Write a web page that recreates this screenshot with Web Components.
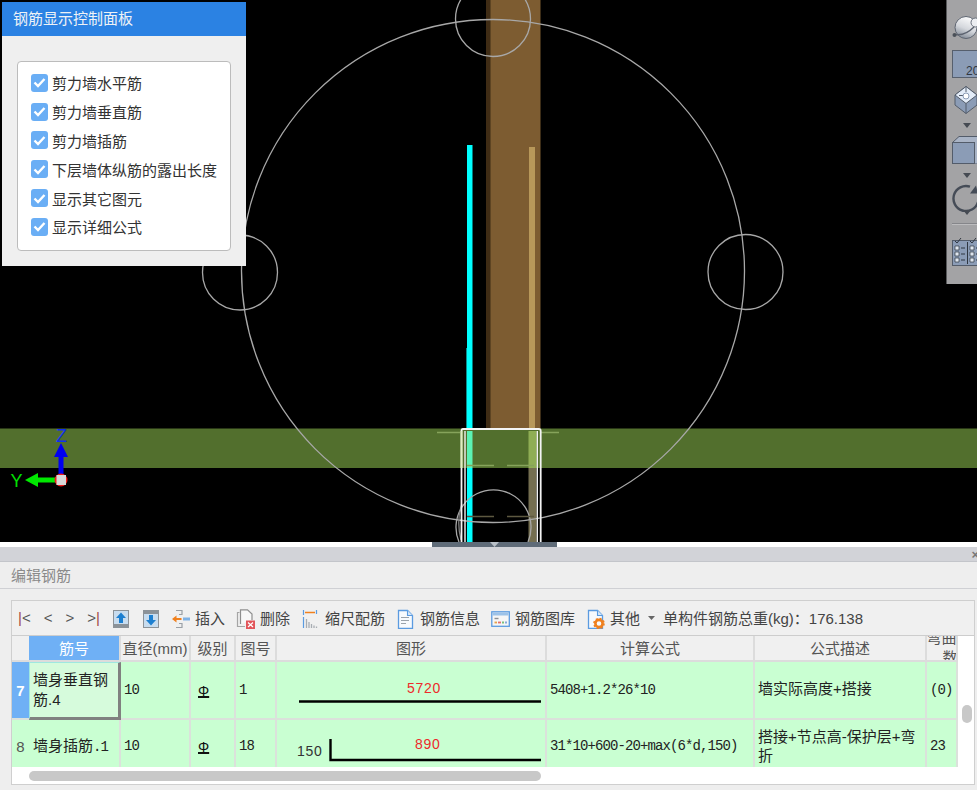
<!DOCTYPE html>
<html lang="zh">
<head>
<meta charset="utf-8">
<title>钢筋显示控制面板</title>
<style>
    html, body { margin: 0; height: 790px; overflow: hidden; background: #eee; }
    body { display: flex; flex-direction: column; font-family: "Liberation Sans", "Noto Sans CJK SC", sans-serif; }
</style>
</head>
<body>
<rebar-viewport>
    <control-panel title-text="钢筋显示控制面板">
        <check-row>剪力墙水平筋</check-row>
        <check-row>剪力墙垂直筋</check-row>
        <check-row>剪力墙插筋</check-row>
        <check-row>下层墙体纵筋的露出长度</check-row>
        <check-row>显示其它图元</check-row>
        <check-row>显示详细公式</check-row>
    </control-panel>
    <view-toolbar></view-toolbar>
</rebar-viewport>
<edit-panel>
    <rebar-toolbar></rebar-toolbar>
    <rebar-table></rebar-table>
</edit-panel>

<script>
class RebarViewport extends HTMLElement {
    constructor() {
        super();
        this.attachShadow({ mode: 'open' });
    }

    connectedCallback() {
        this.shadowRoot.innerHTML = `
            <style>
                :host { display: block; position: relative; height: 542px; flex: none; background: #000; overflow: hidden; }
                svg { display: block; }
                text { font-family: "Liberation Sans", sans-serif; font-size: 18px; }
            </style>
            <svg width="977" height="542" viewBox="0 0 977 542">
                <!-- 墙柱 -->
                <rect x="486" y="0" width="5" height="428" fill="#3f2c15"/>
                <rect x="490.5" y="0" width="50" height="428" fill="#7d5c31"/>
                <rect x="529" y="147" width="6" height="281" fill="#b8985a"/>
                <rect x="466" y="348" width="1" height="80" fill="#0b8f8f"/>
                <rect x="467" y="145" width="5.5" height="397" fill="#00ffff"/>

                <!-- 楼板 -->
                <rect x="0" y="428.5" width="977" height="39.5" fill="#526f2d"/>
                <rect x="467" y="431" width="5.5" height="37" fill="#5cf3b4"/>
                <rect x="528.5" y="431" width="8" height="37" fill="#8fae55"/>
                <rect x="528.5" y="468" width="8" height="74" fill="#746e50"/>

                <g fill="none" stroke="#a8a8a8" stroke-width="1.3">
                    <circle cx="493" cy="271" r="251.5"/>
                    <circle cx="493" cy="19" r="37.5"/>
                    <circle cx="240" cy="272.5" r="37.5"/>
                    <circle cx="745.5" cy="272" r="37.5"/>
                    <path d="M459 542 A37.5 37.5 0 1 1 528 542"/>
                    <path d="M462 504 Q456 520 461 540" stroke="#808080"/>
                </g>

                <g stroke-width="1.5" fill="none">
                    <path d="M437 432.5H460M541 432.5H559" stroke="#86a35b"/>
                    <path d="M467 465.5H494M507 465.5H534" stroke="#86a35b"/>
                    <path d="M467 516.5H494M507 516.5H534" stroke="#5d5840"/>
                </g>

                <!-- 外框 -->
                <path d="M461.5 542V431Q461.5 429 463 429H539Q540.7 429 540.7 431V542" fill="none" stroke="#f4f4f4" stroke-width="1.8"/>
                <path d="M461.5 431V468" fill="none" stroke="#dff0bd" stroke-width="1.8"/>
                <path d="M465 431V542M537.3 431V542" fill="none" stroke="#f2f2f2" stroke-width="1.4"/>

                <!-- 坐标轴 -->
                <rect x="58.5" y="455" width="5" height="22" fill="#0000f0"/>
                <path d="M61 443L68 457H54Z" fill="#0000f0"/>
                <rect x="38" y="477.5" width="18" height="5" fill="#00e800"/>
                <path d="M25 480L38 473V487Z" fill="#00e800"/>
                <circle cx="61" cy="480" r="6.5" fill="#f01818"/>
                <rect x="56.5" y="475" width="9.5" height="10" fill="#d8d8d8"/>
                <text x="56" y="442" fill="#1030f0">Z</text>
                <text x="10.5" y="487" fill="#00e000">Y</text>
            </svg>
            <slot></slot>
        `;
    }
}

class ControlPanel extends HTMLElement {
    constructor() {
        super();
        this.attachShadow({ mode: 'open' });
    }

    connectedCallback() {
        this.shadowRoot.innerHTML = `
            <style>
                :host { display: flex; flex-direction: column; position: absolute; left: 2px; top: 2px; width: 244px; height: 264px; background: #efefef; font-size: 15px; }
                .title { height: 34px; box-sizing: border-box; flex: none; display: flex; align-items: center; padding: 0 0 4px 11px; background: #2b82e3; color: #eef2f6; }
                .body { flex: 1; padding: 25px 15px 15px; display: flex; }
                .box { flex: 1; box-sizing: border-box; padding: 6.5px 13px; background: #fff; border: 1px solid #bcbcbc; border-radius: 4px; display: grid; grid-auto-rows: 28.8px; }
            </style>
            <div class="title">${this.getAttribute('title-text')}</div>
            <div class="body"><div class="box"><slot></slot></div></div>
        `;
    }
}

class CheckRow extends HTMLElement {
    constructor() {
        super();
        this.attachShadow({ mode: 'open' });
    }

    connectedCallback() {
        this.shadowRoot.innerHTML = `
            <style>
                :host { display: flex; align-items: center; gap: 4px; color: #333; font-size: 15px; white-space: nowrap; }
                .box { width: 17px; height: 18px; border-radius: 3px; background: #6aaef5; display: flex; align-items: center; justify-content: center; flex: none; }
            </style>
            <span class="box">
                <svg width="13" height="11" viewBox="0 0 13 11"><path d="M1.5 5.5L5 9L11.5 2" fill="none" stroke="#fff" stroke-width="2.4"/></svg>
            </span>
            <slot></slot>
        `;
    }
}

class ViewToolbar extends HTMLElement {
    constructor() {
        super();
        this.attachShadow({ mode: 'open' });
    }

    connectedCallback() {
        const caret = (top) => `<svg class="caret" style="margin-top:${top}px" width="8" height="5" viewBox="0 0 8 5"><path d="M0 0H8L4 5Z" fill="#454a52"/></svg>`;
        this.shadowRoot.innerHTML = `
            <style>
                :host { display: flex; flex-direction: column; position: absolute; right: 0; top: 0; box-sizing: border-box; width: 31px; height: 284px; background: #a3a3a5; border-left: 1px solid #57585a; overflow: hidden; padding-left: 5px; }
                svg { display: block; flex: none; overflow: hidden; }
                .caret { margin-left: 11px; }
                .sep { margin-top: 8px; height: 1px; background: #85868a; border-bottom: 1px solid #bcbcbe; flex: none; }
                text { font-family: "Liberation Sans", sans-serif; font-size: 12px; fill: #2f3640; }
            </style>
            <svg style="margin-top:15px" width="25" height="25" viewBox="0 0 25 25">
                <defs><linearGradient id="ball" x1="0.7" y1="0" x2="0.3" y2="1"><stop offset="0" stop-color="#ffffff"/><stop offset=".55" stop-color="#d4d7dc"/><stop offset="1" stop-color="#7f8894"/></linearGradient></defs>
                <circle cx="14" cy="12.500" r="11" fill="url(#ball)" stroke="#5d6470"/>
                <circle cx="23.500" cy="7.500" r="4.500" fill="#eceef1" stroke="#6a717c"/>
                <path d="M3.500 19.500Q13 21 22 12" fill="none" stroke="#5d6470" stroke-width="1.400"/>
                <circle cx="2.500" cy="20" r="2" fill="#4a5058"/>
            </svg>
            <svg style="margin-top:10px" width="25" height="28" viewBox="0 0 25 28">
                <rect x=".5" y=".5" width="30" height="27" fill="#8b9cb6" stroke="#565f6d"/>
                <text x="14" y="25">20</text>
            </svg>
            <svg style="margin-top:8px;margin-left:2px" width="23" height="28" viewBox="0 0 23 28">
                <path d="M1 9L12 .5L23 9V19L12 27.500L1 19Z" fill="#8b9cb6" stroke="#535c6a"/>
                <path d="M1 9L12 .5L23 9L12 17.500Z" fill="#e3ecf8" stroke="#535c6a"/>
                <path d="M12 17.500V27.500M12 .5V6M5 9.500L9.500 9.500" stroke="#535c6a" fill="none"/>
                <circle cx="12" cy="10" r="3" fill="#fff" stroke="#8b9cb6"/>
            </svg>
            ${caret(9)}
            <svg style="margin-top:8px" width="25" height="28" viewBox="0 0 25 28">
                <path d="M.5 6.5L7 .5H30V28H.5Z" fill="#a9b4c6" stroke="#535c6a"/>
                <rect x=".5" y="6.5" width="22" height="21" fill="#8b9cb6" stroke="#535c6a"/>
            </svg>
            ${caret(9)}
            <svg style="margin-top:6px" width="25" height="28" viewBox="0 0 25 28">
                <path d="M18 2.700A12.500 12.500 0 1 0 26 18" fill="none" stroke="#454c57" stroke-width="2.400"/>
                <path d="M18 9.500L26 9.500L24 1.500Z" fill="#454c57"/>
            </svg>
            ${caret(-2)}
            <div class="sep"></div>
            <svg style="margin-top:12px" width="25" height="29" viewBox="0 0 25 29">
                <rect x=".5" y="3.5" width="30" height="25" fill="#8b9cb6" stroke="#535c6a"/>
                <path d="M3 4L5 6L9 1M18 4L20 6L24 1" fill="none" stroke="#2f3640"/>
                <path d="M3 9h4v4H3zM3 15h4v4H3zM3 21h4v4H3zM18 9h4v4h-4zM18 15h4v4h-4zM18 21h4v4h-4z" fill="#dfe6f0" stroke="#2f3640" stroke-width=".7"/>
                <path d="M9 11h4M9 17h4M9 23h4M24 11h4M24 17h4M24 23h4M15.500 5V27" stroke="#2f3640"/>
            </svg>
        `;
    }
}

class EditPanel extends HTMLElement {
    constructor() {
        super();
        this.attachShadow({ mode: 'open' });
    }

    connectedCallback() {
        this.shadowRoot.innerHTML = `
            <style>
                :host { display: block; flex: 1; background: #eee; font-size: 15px; }
                .strip { height: 5px; background: #fff; display: flex; justify-content: center; }
                .grip { width: 125px; margin-left: 12px; background: #5f6b78; display: flex; justify-content: center; }
                .dock { height: 15px; box-sizing: border-box; background: #d2d3d8; border-bottom: 1px solid #c3c5ca; display: flex; justify-content: flex-end; align-items: center; overflow: hidden; color: #777; font-size: 13px; padding-right: 0; }
                .dock span { margin-right: -2px; font-weight: bold; }
                .title { height: 27px; box-sizing: border-box; padding: 0 0 2px 11px; display: flex; align-items: center; color: #8a8a8a; border-bottom: 1px solid #cfd0d4; }
                .frame { margin: 11px 2px 0 11px; height: 185px; box-sizing: border-box; border: 1px solid #cfcfcf; background: #fff; overflow: hidden; }
            </style>
            <div class="strip">
                <div class="grip"><svg width="9" height="5" viewBox="0 0 9 5"><path d="M0 0H9L4.500 5Z" fill="#b9c0c8"/></svg></div>
            </div>
            <div class="dock"><span>×</span></div>
            <div class="title">编辑钢筋</div>
            <div class="frame"><slot></slot></div>
        `;
    }
}

class ToolButton extends HTMLElement {
    constructor() {
        super();
        this.attachShadow({ mode: 'open' });
    }

    connectedCallback() {
        this.shadowRoot.innerHTML = `
            <style>
                :host { display: flex; align-items: center; gap: 5px; flex: none; }
                ::slotted(svg) { display: block; flex: none; margin-top: 4px; }
            </style>
            <slot name="icon"></slot><slot></slot>
        `;
    }
}

class RebarToolbar extends HTMLElement {
    constructor() {
        super();
        this.attachShadow({ mode: 'open' });
    }

    connectedCallback() {
        const docPath = '<path d="M2.500 1.500h9l5 5v13h-14z" fill="#f7fafd" stroke="#5b9be0" stroke-width="1.300"/><path d="M11.500 1.500v5h5" fill="#d6e6f6" stroke="#5b9be0" stroke-width="1.100"/>';
        this.shadowRoot.innerHTML = `
            <style>
                :host { display: flex; align-items: center; box-sizing: border-box; height: 35px; padding: 0 0 2px 6px; background: #f0f0f0; border-bottom: 1px solid #cdcdcd; color: #444; font-size: 15px; white-space: nowrap; }
                svg { display: block; flex: none; }
                .nav { display: flex; gap: 13px; margin-right: 13px; color: #555; }
                .nav b { font-weight: normal; color: #a04a4a; }
                .arrows { display: flex; gap: 14px; margin: 4px 13px 0 0; }
                .tools { display: flex; gap: 11px; }
                .drop { margin: 2px 8px 0; }
            </style>
            <div class="nav"><span><b>|</b>&lt;</span><span>&lt;</span><span>&gt;</span><span>&gt;<b>|</b></span></div>
            <div class="arrows">
                <svg width="16" height="18" viewBox="0 0 16 18">
                    <rect x=".5" y=".5" width="15" height="17" fill="#c7dcef" stroke="#8b9298"/>
                    <rect x="0" y="14" width="16" height="4" fill="#8b9298"/>
                    <path d="M8 2.500L13 8H10V13H6V8H3Z" fill="#1c7fd0"/>
                </svg>
                <svg width="16" height="18" viewBox="0 0 16 18">
                    <rect x=".5" y=".5" width="15" height="17" fill="#c7dcef" stroke="#8b9298"/>
                    <rect x="0" y="0" width="16" height="4" fill="#8b9298"/>
                    <path d="M8 15.500L13 10H10V5H6V10H3Z" fill="#1c7fd0"/>
                </svg>
            </div>
            <div class="tools">
                <tool-button>
                    <svg slot="icon" width="18" height="20" viewBox="0 0 18 20">
                        <path d="M4 1.500h6v4H7M4 18.500h6v-4H7" fill="none" stroke="#9aa0a6" stroke-width="1.200"/>
                        <path d="M0 10L4.500 6.500V9H9.500V11H4.500V13.500Z" fill="#f0801e"/>
                        <rect x="11" y="8.500" width="7" height="3" fill="#7fb2e5"/>
                    </svg>插入
                </tool-button>
                <tool-button>
                    <svg slot="icon" width="19" height="20" viewBox="0 0 19 20">
                        <path d="M3.500 3.500H1.500V17.500H9" fill="none" stroke="#a5a5a5" stroke-width="1.200"/>
                        <path d="M4.500 15V.8H11.500L16 5V11" fill="#f8f8f8" stroke="#8f8f8f" stroke-width="1.200"/>
                        <rect x="10" y="11.500" width="9" height="8.500" fill="#e2555a"/>
                        <path d="M12 13.500L17 18M17 13.500L12 18" stroke="#fff" stroke-width="1.200"/>
                    </svg>删除
                </tool-button>
                <tool-button>
                    <svg slot="icon" width="19" height="20" viewBox="0 0 19 20">
                        <path d="M2.500 1V6M15.500 1V5M2.500 8V19" stroke="#5b9be0" stroke-width="1.200"/>
                        <path d="M4 3.500H14" stroke="#f0801e" stroke-width="1.500"/>
                        <path d="M5.500 10V19M8 13V19M10.500 15V19M13 16.500V19M15.500 17.500V19" stroke="#a8adb3" stroke-width="1.300"/>
                    </svg>缩尺配筋
                </tool-button>
                <tool-button>
                    <svg slot="icon" width="19" height="20" viewBox="0 0 19 20">${docPath}
                        <path d="M5 8.500H13M5 11.500H13M5 14.500H10" stroke="#9ba3ab" stroke-width="1.100"/>
                    </svg>钢筋信息
                </tool-button>
                <tool-button>
                    <svg slot="icon" width="19" height="20" viewBox="0 0 19 20">
                        <rect x=".8" y="2.800" width="17.500" height="14.500" fill="#f6f6f6" stroke="#5b9be0" stroke-width="1.300"/>
                        <rect x="1.500" y="3.500" width="16" height="3" fill="#9cc2e8"/>
                        <path d="M3.500 9.500H7.500" stroke="#8b8f94" stroke-width="1.400"/>
                        <path d="M3.500 13.500H6" stroke="#e5a24a" stroke-width="1.800"/>
                        <path d="M7 13.500H10" stroke="#e36f6f" stroke-width="1.800"/>
                        <path d="M11 13.500H13" stroke="#7cbf7c" stroke-width="1.800"/>
                        <path d="M14 13.500H16" stroke="#8aa8d8" stroke-width="1.800"/>
                    </svg>钢筋图库
                </tool-button>
                <tool-button>
                    <svg slot="icon" width="19" height="20" viewBox="0 0 19 20">${docPath}
                        <circle cx="13" cy="14.500" r="3.600" fill="none" stroke="#f0801e" stroke-width="2.600"/>
                        <circle cx="13" cy="14.500" r="5" fill="none" stroke="#f0801e" stroke-width="1.600" stroke-dasharray="2 1.930"/>
                    </svg>其他
                </tool-button>
            </div>
            <svg class="drop" width="7" height="4" viewBox="0 0 7 4"><path d="M0 0H7L3.500 4Z" fill="#666"/></svg>
            <span>单构件钢筋总重(kg)：176.138</span>
        `;
    }
}

class RebarTable extends HTMLElement {
    constructor() {
        super();
        this.attachShadow({ mode: 'open' });
    }

    connectedCallback() {
        const headers = ['直径(mm)', '级别', '图号', '图形', '计算公式', '公式描述'];
        const shape7 = `
            <svg width="270" height="56" viewBox="0 0 270 56">
                <text x="131" y="31" fill="#ee2a2a">5720</text>
                <path d="M23 39.500H265" stroke="#000" stroke-width="2.400"/>
            </svg>`;
        const shape8 = `
            <svg width="270" height="52" viewBox="0 0 270 52">
                <text x="139" y="29" fill="#ee2a2a">890</text>
                <text x="21" y="36" fill="#333">150</text>
                <path d="M54.500 19V40H265" fill="none" stroke="#000" stroke-width="2.400"/>
            </svg>`;

        this.shadowRoot.innerHTML = `
            <style>
                :host { display: block; color: #222; font-size: 15px; }
                .top { display: flex; align-items: flex-start; }
                .grid { width: 946px; height: 131px; overflow: hidden; display: grid; grid-template-columns: 17px 92px 70px 45px 41px 270px 208px 172px 31px; grid-template-rows: 26px 58px 54px; background: #c9ffd2; }
                .vtrack { width: 16px; height: 131px; flex: none; }
                .vthumb { width: 10px; height: 18px; margin: 69px 0 0 4px; background: #c8c8c8; border-radius: 5px; }
                .htrack { height: 18px; padding: 4px 0 0 17px; box-sizing: border-box; }
                .hthumb { width: 512px; height: 10px; background: #c8c8c8; border-radius: 5px; }
                .c { box-sizing: border-box; border-right: 2px solid #dbe1db; border-bottom: 2px solid #dbe1db; padding: 0 2px 0 3px; display: flex; align-items: center; overflow: hidden; line-height: 19px; }
                .h { background: #f0f0f0; color: #555; justify-content: center; padding: 0; white-space: nowrap; border-color: #dcdcdc; }
                .h.active { background: #6fb0f5; color: #fff; }
                .h.wrap { flex-direction: column; line-height: 20px; }
                .h.wrap span:last-child { margin-left: 17px; }
                .n { justify-content: center; padding: 0; color: #555; border-right: 0; }
                .n.active { background: #6fb0f5; color: #fff; font-weight: bold; }
                .name { padding-left: 4px; }
                .selected { background: #d6fbdc; padding-left: 3px; line-height: 20px; border-top: 1px solid #9fe8e0; border-left: 1px solid #9fe8e0; border-right: 3px solid #808080; border-bottom: 3px solid #808080; }
                .up { padding-bottom: 4px; }
                .m { font-family: "Liberation Mono", "Noto Sans CJK SC", monospace; font-size: 14px; letter-spacing: -0.9px; }
                .grade { font-family: "Liberation Sans", sans-serif; font-size: 14px; line-height: 15px; text-decoration: underline; text-decoration-thickness: 1.500px; text-decoration-skip-ink: none; text-underline-offset: 0; padding: 3px 0 0 4px; color: #111; }
                svg { display: block; flex: none; margin-left: -1px; }
                .shape { padding: 0; align-items: flex-start; }
                text { font-family: "Liberation Sans", sans-serif; font-size: 14px; letter-spacing: .7px; }
            </style>
            <div class="top">
                <div class="grid">
                    <div class="c h n"></div>
                    <div class="c h active">筋号</div>
                    ${headers.map((h) => `<div class="c h">${h}</div>`).join('')}
                    <div class="c h wrap"><span>弯曲</span><span>数</span></div>

                    <div class="c n active">7</div>
                    <div class="c selected"><span>墙身垂直钢筋.4</span></div>
                    <div class="c m">10</div>
                    <div class="c"><span class="grade">Φ</span></div>
                    <div class="c m">1</div>
                    <div class="c shape">${shape7}</div>
                    <div class="c m">5408+1.2*26*10</div>
                    <div class="c up">墙实际高度+搭接</div>
                    <div class="c m">(0)</div>

                    <div class="c n">8</div>
                    <div class="c name"><span>墙身插筋<span class="m">.1</span></span></div>
                    <div class="c m">10</div>
                    <div class="c"><span class="grade">Φ</span></div>
                    <div class="c m">18</div>
                    <div class="c shape">${shape8}</div>
                    <div class="c m">31*10+600-20+max(6*d,150)</div>
                    <div class="c">搭接+节点高-保护层+弯折</div>
                    <div class="c m">23</div>
                </div>
                <div class="vtrack"><div class="vthumb"></div></div>
            </div>
            <div class="htrack"><div class="hthumb"></div></div>
        `;
    }
}

customElements.define('rebar-viewport', RebarViewport);
customElements.define('control-panel', ControlPanel);
customElements.define('check-row', CheckRow);
customElements.define('view-toolbar', ViewToolbar);
customElements.define('edit-panel', EditPanel);
customElements.define('tool-button', ToolButton);
customElements.define('rebar-toolbar', RebarToolbar);
customElements.define('rebar-table', RebarTable);
</script>
</body>
</html>
